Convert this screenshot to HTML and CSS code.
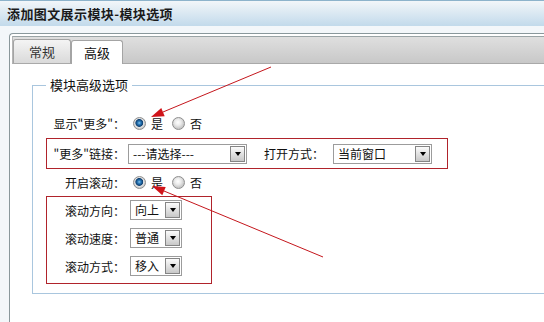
FILE: index.html
```html
<!DOCTYPE html>
<html lang="zh-CN">
<head>
<meta charset="utf-8">
<title>添加图文展示模块-模块选项</title>
<link rel="stylesheet" href="styles.css">
</head>
<body>
<div class="titlebar">添加图文展示模块-模块选项</div>
<div class="wrap">
  <div class="panel">
    <div class="tabbar">
      <div class="tab tab-normal">常规</div>
      <div class="tab tab-active">高级</div>
    </div>
    <div class="content">
      <fieldset class="group">
        <legend>模块高级选项</legend>
        <div class="row row-top">
          <span class="label">显示"更多"：</span>
          <span class="radios">
            <span class="opt"><span class="radio checked"></span>是</span>
            <span class="opt"><span class="radio"></span>否</span>
          </span>
        </div>
        <div class="row box box-link">
          <span class="label">"更多"链接：</span>
          <span class="select sel-link"><span class="sel-text">---请选择---</span><span class="sel-btn"></span></span>
          <span class="label2">打开方式：</span>
          <span class="select sel-open"><span class="sel-text">当前窗口</span><span class="sel-btn"></span></span>
        </div>
        <div class="row row-scroll">
          <span class="label">开启滚动：</span>
          <span class="radios">
            <span class="opt"><span class="radio checked"></span>是</span>
            <span class="opt"><span class="radio"></span>否</span>
          </span>
        </div>
        <div class="box box-scroll">
          <div class="srow">
            <span class="label">滚动方向：</span>
            <span class="select sel-small"><span class="sel-text">向上</span><span class="sel-btn"></span></span>
          </div>
          <div class="srow">
            <span class="label">滚动速度：</span>
            <span class="select sel-small"><span class="sel-text">普通</span><span class="sel-btn"></span></span>
          </div>
          <div class="srow">
            <span class="label">滚动方式：</span>
            <span class="select sel-small"><span class="sel-text">移入</span><span class="sel-btn"></span></span>
          </div>
        </div>
      </fieldset>
    </div>
  </div>
</div>
<svg class="arrows" width="544" height="322" viewBox="0 0 544 322">
  <line x1="271" y1="67" x2="163" y2="112" stroke="#c4161c" stroke-width="1"/>
  <polygon points="151,117 164.7,116.2 161.3,107.9" fill="#d0141a"/>
  <line x1="323" y1="257" x2="164" y2="191" stroke="#c4161c" stroke-width="1"/>
  <polygon points="152,186 165.7,186.9 162.3,195.2" fill="#d0141a"/>
</svg>
</body>
</html>
```
FILE: styles.css
```css
html, body {
  margin: 0;
  padding: 0;
}
body {
  width: 544px;
  height: 322px;
  overflow: hidden;
  position: relative;
  background: #f3f7fa;
  font-family: "Noto Sans CJK SC", "Liberation Sans", sans-serif;
  font-size: 12px;
  color: #111;
}
.titlebar {
  height: 25px;
  border-top: 1px solid #8db3cb;
  background: linear-gradient(#f2f6f9, #c2daeb);
  font-size: 13px;
  font-weight: bold;
  letter-spacing: 0.4px;
  line-height: 25px;
  padding-left: 7px;
  color: #1a1a1a;
}
.wrap {
  padding: 7px 0 0 9px;
}
.panel {
  box-sizing: border-box;
  height: 289px;
  border: 1px solid #8a989c;
  border-right: none;
  border-bottom: none;
  border-radius: 4px 0 0 0;
  background: #fff;
  padding: 2px 0 0 2px;
}
.tabbar {
  height: 26px;
  border-top: 1px solid #9aa4a6;
  border-bottom: 1px solid #a9a9a9;
  border-left: 1px solid #b5b5b5;
  background: linear-gradient(#dfdfdf, #c8c8c8);
  display: flex;
  align-items: flex-end;
}
.tab {
  box-sizing: border-box;
  height: 24px;
  border: 1px solid #a4a4a4;
  border-bottom: none;
  border-radius: 3px 3px 0 0;
  text-align: center;
  font-size: 13px;
  line-height: 23px;
}
.tab-normal {
  width: 58px;
  background: linear-gradient(#f4f4f4, #dadada);
  color: #333;
}
.tab-active {
  width: 52px;
  margin-bottom: -1px;
  background: #fff;
  color: #111;
}
.content {
  padding: 13px 0 0 20px;
}
.group {
  box-sizing: border-box;
  margin: 0;
  padding: 0 0 9px 13px;
  border: 1px solid #a9c6de;
  border-right: none;
  min-width: 0;
}
.group legend {
  padding: 0 4px;
  font-size: 13px;
  line-height: 16px;
  color: #111;
}
.row {
  display: flex;
  align-items: center;
  box-sizing: border-box;
  border: 1px solid transparent;
}
.row-top {
  height: 30px;
  margin-top: 15px;
}
.row-scroll {
  height: 27px;
}
.label {
  width: 78px;
  text-align: right;
  white-space: nowrap;
  flex: none;
}
.radios {
  display: flex;
  align-items: center;
  margin-left: 8px;
}
.opt {
  display: flex;
  align-items: center;
  margin-right: 9px;
}
.radio {
  width: 13px;
  height: 13px;
  box-sizing: border-box;
  border-radius: 50%;
  border: 1px solid #8e8e8e;
  background: radial-gradient(circle at 45% 40%, #ffffff 0, #ececec 3px, #c9c9c9 6px);
  margin-right: 5px;
}
.radio.checked {
  background: radial-gradient(circle at 48% 45%, #8fc6ea 0, #2e7fbf 1.5px, #0e3f70 3.5px, #e6e6e6 4.3px, #c6c6c6 6px);
}
.box {
  border: 1px solid #b0232b;
}
.box-link {
  height: 31px;
  width: fit-content;
  padding-right: 15px;
}
.select {
  display: inline-flex;
  align-items: center;
  box-sizing: border-box;
  height: 20px;
  border: 1px solid #9c9c9c;
  background: #fff;
  flex: none;
}
.sel-text {
  flex: 1;
  padding-left: 4px;
  white-space: nowrap;
  line-height: 18px;
}
.sel-btn {
  width: 15px;
  height: 16px;
  box-sizing: border-box;
  border: 1px solid #858585;
  margin-right: 1px;
  background: linear-gradient(#fbfbfb, #c8c8c8);
  display: flex;
  align-items: center;
  justify-content: center;
}
.sel-btn::after {
  content: "";
  width: 0;
  height: 0;
  border-left: 3.5px solid transparent;
  border-right: 3.5px solid transparent;
  border-top: 4px solid #000;
}
.sel-link {
  width: 119px;
  margin-left: 3px;
}
.label2 {
  margin-left: 17px;
  white-space: nowrap;
}
.sel-open {
  width: 99px;
  margin-left: 9px;
}
.box-scroll {
  box-sizing: border-box;
  width: 166px;
  padding: 3px 0 7px;
  display: flex;
  flex-direction: column;
  gap: 8px;
}
.srow {
  display: flex;
  align-items: center;
  height: 20px;
}
.sel-small {
  width: 52px;
  margin-left: 5px;
}
.arrows {
  position: absolute;
  left: 0;
  top: 0;
  pointer-events: none;
}
```
